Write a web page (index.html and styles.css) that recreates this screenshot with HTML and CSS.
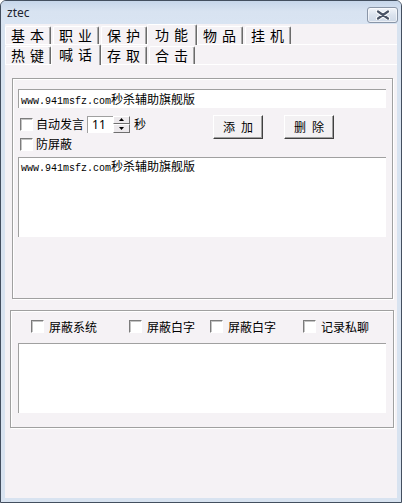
FILE: index.html
```html
<!DOCTYPE html>
<html lang="zh">
<head>
<meta charset="utf-8">
<title>ztec</title>
<link rel="stylesheet" href="styles.css">
</head>
<body>
<div class="window">
  <div class="titlebar">
    <span class="title">ztec</span>
    <span class="close">
      <svg width="14" height="10" viewBox="0 0 14 10">
        <path d="M2 1.5 L12 8.5 M12 1.5 L2 8.5" stroke="#fff" stroke-width="4.2" stroke-linecap="round"/>
        <path d="M2 1.5 L12 8.5 M12 1.5 L2 8.5" stroke="#4a5466" stroke-width="2.2" stroke-linecap="round"/>
      </svg>
    </span>
  </div>
  <div class="client">
    <div class="tabs">
      <div class="tabrow">
        <span class="tab">基本</span>
        <span class="tab">职业</span>
        <span class="tab">保护</span>
        <span class="tab sel">功能</span>
        <span class="tab">物品</span>
        <span class="tab">挂机</span>
      </div>
      <div class="tabrow">
        <span class="tab">热键</span>
        <span class="tab sel">喊话</span>
        <span class="tab">存取</span>
        <span class="tab">合击</span>
      </div>
    </div>
    <div class="panel">
      <div class="group g1">
        <div class="edit single"><span class="mono">www.941msfz.com</span>秒杀辅助旗舰版</div>
        <div class="controls">
          <div class="leftcol">
            <div class="crow">
              <span class="cb"></span><span class="lbl">自动发言</span>
              <div class="spin">
                <span class="spin-val">11</span>
                <span class="spin-btns">
                  <span class="sbtn"><svg width="5" height="3" viewBox="0 0 5 3"><path d="M0 3 L2.5 0 L5 3Z" fill="#000"/></svg></span>
                  <span class="sbtn"><svg width="5" height="3" viewBox="0 0 5 3"><path d="M0 0 L2.5 3 L5 0Z" fill="#000"/></svg></span>
                </span>
              </div>
              <span class="sec">秒</span>
            </div>
            <div class="crow">
              <span class="cb"></span><span class="lbl">防屏蔽</span>
            </div>
          </div>
          <button class="btn">添加</button>
          <button class="btn">删除</button>
        </div>
        <div class="edit multi"><span class="mono">www.941msfz.com</span>秒杀辅助旗舰版</div>
      </div>
      <div class="group g2">
        <div class="checks">
          <label class="chk w1"><span class="cb"></span><span class="lbl2">屏蔽系统</span></label>
          <label class="chk w2"><span class="cb"></span><span class="lbl2">屏蔽白字</span></label>
          <label class="chk w3"><span class="cb"></span><span class="lbl2">屏蔽白字</span></label>
          <label class="chk"><span class="cb"></span><span class="lbl2">记录私聊</span></label>
        </div>
        <div class="edit log"></div>
      </div>
    </div>
  </div>
</div>
</body>
</html>
```
FILE: styles.css
```css
* { box-sizing: border-box; margin: 0; padding: 0; }
html, body { width: 402px; height: 503px; overflow: hidden; background: #ffffff; }
body {
  font-family: "Noto Sans CJK SC", "Noto Sans", sans-serif;
  font-size: 12px;
  color: #000;
}
.window {
  width: 402px;
  height: 503px;
  display: flex;
  flex-direction: column;
  background: #d8e3f0;
  border: 1px solid #434f5f;
  border-radius: 6px 6px 0 0;
  overflow: hidden;
}
.titlebar {
  height: 23px;
  flex: none;
  display: flex;
  align-items: center;
  justify-content: space-between;
  padding: 0 3px 0 6px;
  background: linear-gradient(#c6d6ea, #d8e3f1 45%, #d9e4f2);
}
.title {
  font-family: "Noto Sans", "Liberation Sans", sans-serif;
  font-size: 12px;
  color: #1c2330;
  line-height: 14px;
  margin-top: 1px;
}
.close {
  width: 31px;
  height: 16px;
  margin-top: 4px;
  border: 1px solid #8a96a8;
  border-radius: 3px;
  background: linear-gradient(#f2f5fa, #dbe3ee 50%, #cfd9e7);
  box-shadow: inset 0 0 0 1px rgba(255,255,255,0.6);
  display: flex;
  align-items: center;
  justify-content: center;
}
.close svg { display: block; }
.client {
  flex: 1;
  margin: 0 4px 4px 4px;
  background: #f5f2f5;
  display: flex;
  flex-direction: column;
}
.tabs { padding-top: 1px; flex: none; }
.tabrow {
  display: flex;
  align-items: flex-end;
  gap: 2px;
  height: 20px;
  border-bottom: 1px solid #ffffff;
}
.tab {
  width: 46px;
  height: 18px;
  flex: none;
  display: flex;
  align-items: center;
  justify-content: center;
  border-top: 1px solid #ffffff;
  border-left: 1px solid #ffffff;
  border-right: 1px solid #6b6b6b;
  box-shadow: inset -1px 0 #a8a8a8;
  border-radius: 2px 2px 0 0;
  font-size: 14px;
  line-height: 15px;
  letter-spacing: 5px;
  padding-left: 4px;
  white-space: nowrap;
  overflow: hidden;
  color: #000;
  background: #f5f2f5;
}
.tab.sel {
  width: 50px;
  height: 21px;
  margin: 0 -2px -1px -2px;
  position: relative;
  z-index: 1;
  align-items: flex-start;
  padding-top: 2px;
  line-height: 14px;
}
.panel {
  flex: 1;
  padding: 13px 4px 0 7px;
  display: flex;
  flex-direction: column;
}
.group {
  border: 1px solid #a0a0a0;
  box-shadow: inset 1px 1px #ffffff, 1px 1px #ffffff;
}
.g1 {
  width: 381px;
  height: 221px;
  padding: 10px 6px 0 5px;
}
.edit {
  background: #ffffff;
  border-top: 1px solid #a0a0a0;
  border-left: 1px solid #a0a0a0;
  font-size: 12px;
  line-height: 17px;
  padding-left: 2px;
  white-space: nowrap;
  overflow: hidden;
}
.mono {
  font-family: "Liberation Mono", "DejaVu Sans Mono", monospace;
  font-size: 10px;
}
.edit.single { width: 368px; height: 19px; }
.controls {
  margin-top: 6px;
  display: grid;
  grid-template-columns: 174px 50px 50px;
  column-gap: 21px;
  align-items: start;
}
.leftcol { display: flex; flex-direction: column; }
.crow {
  height: 20px;
  display: flex;
  align-items: center;
  padding-left: 2px;
}
.cb {
  width: 13px;
  height: 13px;
  flex: none;
  background: #ffffff;
  border: 1px solid;
  border-color: #7c7c7c #ffffff #ffffff #7c7c7c;
  box-shadow: inset 1px 1px #c4c4c4;
}
.lbl { margin-left: 3px; line-height: 16px; white-space: nowrap; }
.spin { display: flex; align-items: center; margin-left: 3px; }
.spin-val {
  width: 26px;
  height: 17px;
  background: #ffffff;
  border-top: 1px solid #a0a0a0;
  border-left: 1px solid #a0a0a0;
  font-family: "Noto Sans", "Liberation Sans", sans-serif;
  font-size: 12px;
  line-height: 15px;
  padding-left: 4px;
}
.spin-btns {
  display: flex;
  flex-direction: column;
  width: 17px;
  height: 17px;
}
.sbtn {
  height: 8.5px;
  display: flex;
  align-items: center;
  justify-content: center;
  background: #ece9ec;
  border: 1px solid;
  border-color: #ffffff #6f6f6f #6f6f6f #ffffff;
}
.sbtn svg { display: block; }
.sec { margin-left: 4px; line-height: 16px; }
.btn {
  height: 24px;
  margin-top: 1px;
  background: #f3f1f3;
  border: 1px solid;
  border-color: #ffffff #404040 #404040 #ffffff;
  box-shadow: inset -1px -1px #a0a0a0;
  font-family: "Noto Sans CJK SC", sans-serif;
  font-size: 12px;
  letter-spacing: 6px;
  text-indent: 6px;
  color: #000;
  line-height: 18px;
}
.edit.multi {
  margin-top: 3px;
  width: 368px;
  height: 80px;
  white-space: normal;
  line-height: 15px;
}
.g2 {
  width: 384px;
  height: 118px;
  margin-top: 11px;
  margin-left: -2px;
  padding: 9px 0 0 20px;
}
.checks { display: flex; align-items: center; height: 13px; }
.chk { display: flex; align-items: center; flex: none; }
.w1 { width: 98px; }
.w2 { width: 81px; }
.w3 { width: 93px; }
.lbl2 { margin-left: 5px; line-height: 16px; }
.edit.log {
  margin-top: 10px;
  margin-left: -13px;
  width: 368px;
  height: 70px;
}
```
